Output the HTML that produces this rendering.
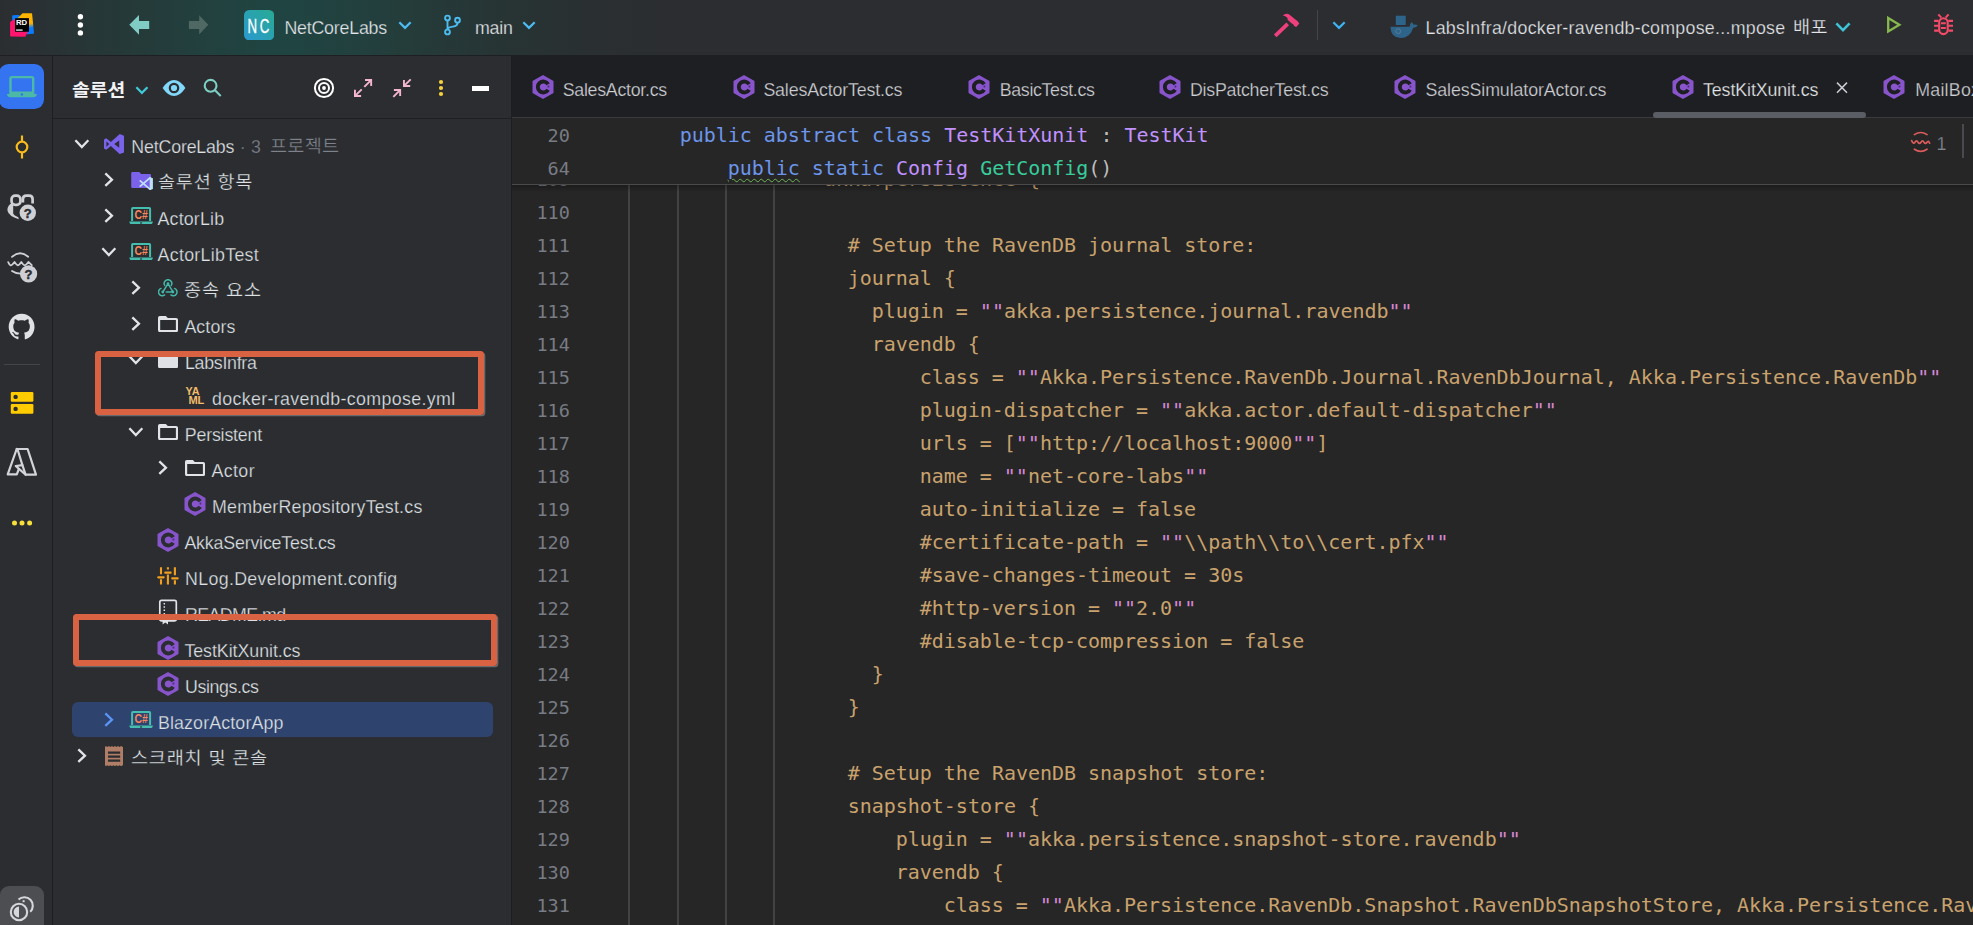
<!DOCTYPE html><html lang="ko"><head><meta charset="utf-8"><title>Rider</title><style>
html,body{margin:0;padding:0;background:#2b2d30;overflow:hidden}
#root{position:relative;width:1973px;height:925px;overflow:hidden;background:#2b2d30}
span{display:block}
.k{color:#6c95eb}.c{color:#c191ff}.m{color:#39cc9b}.e{color:#d688d4}.p{color:#bdbdbd}
</style></head><body><div id="root">
<div style="position:absolute;left:0px;top:0px;width:1973px;height:55px;background:linear-gradient(90deg,#2b2e31 0px,#2a3134 40px,#263737 100px,#243c3b 160px,#22403e 200px,#204441 260px,#204441 300px,#22403e 360px,#243d3b 400px,#253938 440px,#273434 500px,#293132 560px,#2a2f31 600px,#2b2e30 640px,#2b2d30 700px);"></div>
<div style="position:absolute;left:0px;top:55px;width:1973px;height:1px;background:#1e1f22;"></div>
<div style="position:absolute;left:52px;top:56px;width:1px;height:869px;background:#1e1f22;"></div>
<div style="position:absolute;left:53px;top:118px;width:458px;height:1px;background:#1e1f22;"></div>
<div style="position:absolute;left:511px;top:56px;width:1px;height:869px;background:#1e1f22;"></div>
<div style="position:absolute;left:512px;top:56px;width:1461px;height:61px;background:#1e1f22;"></div>
<div style="position:absolute;left:512px;top:117px;width:1461px;height:1px;background:#393b40;"></div>
<div style="position:absolute;left:512px;top:118px;width:1461px;height:807px;background:#262626;"></div>
<svg style="position:absolute;left:9px;top:11px;" width="28" height="28" viewBox="0 0 28 28"><defs><linearGradient id="rg1" x1="0.5" y1="0" x2="0.6" y2="1"><stop offset="0" stop-color="#ffb400"/><stop offset="0.5" stop-color="#ffb400"/><stop offset="0.72" stop-color="#0a7bff"/><stop offset="1" stop-color="#0a7bff"/></linearGradient></defs><path d="M3.200 4.800 Q3.200 4.200 3.800 4.200 L10.500 4 V8.500 L3.200 10.200 Z" fill="#0a7bff"/><path d="M13.600 2.200 H22.400 Q23 2.200 23.100 2.800 L25 22 Q25 22.800 24.300 22.800 L17.500 23.200 L19 7.500 H8.200 Z" fill="url(#rg1)"/><path d="M1.100 11.300 Q1.100 10.700 1.700 10.400 L6.500 7.800 V20.600 H19.600 L18 22.300 L16.600 25.300 Q16.400 25.800 15.800 25.800 L1.800 25.400 Q1.100 25.400 1.100 24.700 Z" fill="#ff146e"/><rect x="6" y="7.200" width="14" height="13.500" fill="#000"/><text x="7" y="13.600" font-family="Liberation Sans,sans-serif" font-weight="700" font-size="7.400" fill="#fff" textLength="11.200" lengthAdjust="spacingAndGlyphs">RD</text><rect x="7.100" y="18.300" width="6.500" height="1.600" fill="#c4c4c4"/></svg>
<svg style="position:absolute;left:75px;top:10px;" width="12" height="32" viewBox="0 0 12 32"><circle cx="5.400" cy="6.800" r="2.700" fill="#fff"/><circle cx="5.400" cy="15" r="2.700" fill="#fff"/><circle cx="5.400" cy="22.900" r="2.700" fill="#fff"/></svg>
<svg style="position:absolute;left:128px;top:14px;" width="24" height="22" viewBox="0 0 24 22"><path d="M1.300 10.800 L11 1.100 V6.900 H21.200 V15.100 H11 V20.700 Z" fill="#80ccc4"/></svg>
<svg style="position:absolute;left:187px;top:14px;" width="24" height="22" viewBox="0 0 24 22"><path d="M21.300 10.800 L12.200 1.300 V7.100 H1.900 V15.100 H12.200 V20.600 Z" fill="#506864"/></svg>
<svg style="position:absolute;left:243.9px;top:9.7px;" width="30.2" height="30.3" viewBox="0 0 30.2 30.3"><defs><linearGradient id="ncg" x1="0" y1="1" x2="1" y2="0"><stop offset="0" stop-color="#2a99d0"/><stop offset="1" stop-color="#28aa92"/></linearGradient></defs><rect x="0" y="0" width="30.2" height="30.3" rx="5.2" fill="url(#ncg)"/><text x="3.500" y="23.500" font-family="Liberation Sans,sans-serif" font-size="20.500" letter-spacing="4" fill="#fff" stroke="#fff" stroke-width="0.35" textLength="24.400" lengthAdjust="spacingAndGlyphs">NC</text></svg>
<svg style="position:absolute;left:397px;top:20px;" width="16" height="11" viewBox="0 0 16 11"><path d="M3.1 3.1 L8.0 7.9 L12.9 3.1" fill="none" stroke="#4cbcf2" stroke-width="2.2" stroke-linecap="square" stroke-linejoin="miter"/></svg>
<svg style="position:absolute;left:442px;top:13px;" width="22" height="24" viewBox="0 0 22 24"><g fill="none" stroke="#4cbcf2" stroke-width="1.9"><circle cx="5.5" cy="5" r="2.4"/><circle cx="15.5" cy="7.2" r="2.4"/><circle cx="5.5" cy="19" r="2.4"/><path d="M5.5 7.6 V16.4"/><path d="M15.5 9.8 Q15.5 13.2 11 13.6 Q6 14 5.5 16.4"/></g></svg>
<svg style="position:absolute;left:521px;top:20px;" width="16" height="11" viewBox="0 0 16 11"><path d="M3.1 3.1 L8.0 7.9 L12.9 3.1" fill="none" stroke="#4cbcf2" stroke-width="2.2" stroke-linecap="square" stroke-linejoin="miter"/></svg>
<svg style="position:absolute;left:1272px;top:12px;" width="30" height="28" viewBox="0 0 30 28"><path d="M3.200 23.900 L15.700 11.800" stroke="#ee407d" stroke-width="3.800" fill="none"/><path d="M10.800 3.500 Q14.400 0.300 18.200 3.200 L23.400 7.600 Q25.500 8.800 27.300 11.500 L24.300 15 Q22.300 14.600 21.100 12.200 L19.100 11.100 L15.600 7.700 L15.500 5.900 Q13.400 3.600 10.800 3.500 Z" fill="#ee407d"/></svg>
<div style="position:absolute;left:1317px;top:10px;width:1px;height:30px;background:#43454a;"></div>
<svg style="position:absolute;left:1331px;top:20px;" width="16" height="11" viewBox="0 0 16 11"><path d="M3.1 3.1 L8.0 7.9 L12.9 3.1" fill="none" stroke="#3db4f2" stroke-width="2.2" stroke-linecap="square" stroke-linejoin="miter"/></svg>
<svg style="position:absolute;left:1389px;top:15px;" width="30" height="25" viewBox="0 0 30 25"><rect x="6.800" y="0.700" width="9.900" height="9.300" fill="#2e648a"/><path d="M1.400 11.800 H20.700 Q20.600 8.300 22.800 6.900 Q24.300 8.300 24.500 9.700 Q26.600 9.200 28.900 10.300 Q27.200 12.900 24.200 12.700 Q21.300 23 11.500 23 Q1.900 22.800 1.400 11.800 Z" fill="#2e648a"/><circle cx="9.200" cy="16.200" r="2.400" fill="none" stroke="#5b7d93" stroke-width="0.900"/></svg>
<svg style="position:absolute;left:1834px;top:20.5px;" width="18" height="12.5" viewBox="0 0 18 12.5"><path d="M3.3 3.3 L9.0 9.2 L14.7 3.3" fill="none" stroke="#3ec4d6" stroke-width="2.6" stroke-linecap="square" stroke-linejoin="miter"/></svg>
<svg style="position:absolute;left:1884px;top:14px;" width="22" height="22" viewBox="0 0 22 22"><path d="M4.200 3.900 L15.400 10.700 L4.200 17.500 Z" fill="none" stroke="#87b94d" stroke-width="2.300" stroke-linejoin="miter"/></svg>
<svg style="position:absolute;left:1931px;top:12px;" width="26" height="26" viewBox="0 0 26 26"><g fill="none" stroke="#f54b69" stroke-width="2.100"><rect x="8.200" y="6.300" width="8.500" height="15.800" rx="4.250"/><path d="M7.300 2.400 L10.300 5.600 M17.600 2.400 L14.600 5.600"/><path d="M3.100 8.900 H7.600 M3.100 13.700 H7.600 M3.100 18.600 H7.600 M17.300 8.900 H22 M17.300 13.700 H22 M17.300 18.600 H22"/><path d="M10 11.300 H14.800 M10 16 H14.800"/></g></svg>
<div style="position:absolute;left:-1px;top:64px;width:45.3px;height:45.1px;background:#3574f0;border-radius:9.5px"></div>
<svg style="position:absolute;left:4px;top:72px;" width="38" height="30" viewBox="0 0 38 30"><path d="M6.500 20.800 V6.600 Q6.5 5.100 8 5.1 H27.700 Q29.200 5.100 29.2 6.600 V20.800 Z" fill="none" stroke="#4bb9a5" stroke-width="2.400"/><path d="M2.900 21.900 H33 Q32.300 25.200 29.500 25.2 H6.400 Q3.600 25.200 2.900 21.900 Z" fill="#4bb9a5"/><circle cx="17.9" cy="22.500" r="1.250" fill="#3574f0"/></svg>
<svg style="position:absolute;left:10px;top:134px;" width="24" height="26" viewBox="0 0 24 26"><g fill="none" stroke="#f8bb1c" stroke-width="2.2"><circle cx="12" cy="13" r="5.3"/><path d="M12 1.5 V7.7 M12 18.3 V24.5"/></g></svg>
<svg style="position:absolute;left:5px;top:192px;" width="36" height="32" viewBox="0 0 36 32"><g fill="none" stroke="#ced0d6" stroke-width="2.700"><rect x="6.550" y="3.550" width="8.900" height="9.300" rx="3.600"/><path d="M17.900 10.500 V7.200 Q17.900 3.600 21.500 3.600 H24 Q27.600 3.600 27.600 7.200 V11.500"/></g><path d="M5.300 12 Q1.900 15 2.500 18.800 Q3.600 24.200 13.800 27.200 L13.300 25.300 Q9 23.500 8.200 21.700 V12 Z" fill="#ced0d6"/><circle cx="22.800" cy="20.800" r="9.600" fill="#2b2d30"/><circle cx="22.800" cy="20.800" r="8.200" fill="#ced0d6"/><text x="22.800" y="25.700" text-anchor="middle" font-family="Liberation Sans,sans-serif" font-weight="700" font-size="13" fill="#2b2d30" stroke="#2b2d30" stroke-width="0.400">?</text></svg>
<svg style="position:absolute;left:4px;top:250px;" width="38" height="36" viewBox="0 0 38 36"><g fill="none" stroke="#ced0d6" stroke-width="1.800" stroke-linecap="round" stroke-linejoin="round"><path d="M8 6.900 Q16 -0.200 24.200 6.700"/><path d="M4.200 12.100 Q5.800 15.500 6.900 15.300 Q8.500 14.800 10.500 11.900 Q12.300 14.900 13.900 15.300 Q15.400 14.900 17.300 11.900 Q19 14.900 20.700 15.300 Q22.300 14.900 24.400 11.900 L27.800 15.100"/><path d="M8 21 Q11.500 23.500 16.500 23.700"/></g><circle cx="24.600" cy="23.900" r="8.600" fill="#ced0d6"/><text x="24.600" y="28.800" text-anchor="middle" font-family="Liberation Sans,sans-serif" font-weight="700" font-size="13" fill="#2b2d30" stroke="#2b2d30" stroke-width="0.400">?</text></svg>
<svg style="position:absolute;left:8.35px;top:313.35px;" width="27.3" height="27.3" viewBox="0 0 28 28"><path fill="#dfe1e5" d="M14 0.8 C6.6 0.8 0.7 6.8 0.7 14.2 c0 5.9 3.8 10.9 9.1 12.7 0.7 0.1 0.9-0.3 0.9-0.6 v-2.3 c-3.7 0.8-4.5-1.8-4.5-1.8 -0.6-1.5-1.5-1.9-1.5-1.9 -1.2-0.8 0.1-0.8 0.1-0.8 1.3 0.1 2 1.4 2 1.4 1.2 2 3.1 1.4 3.9 1.1 0.1-0.9 0.5-1.4 0.8-1.8 -3-0.3-6.1-1.5-6.1-6.6 0-1.5 0.5-2.6 1.4-3.6 -0.1-0.3-0.6-1.7 0.1-3.5 0 0 1.1-0.4 3.7 1.4 1.1-0.3 2.2-0.4 3.3-0.4 s2.3 0.2 3.3 0.4 c2.5-1.7 3.7-1.4 3.7-1.4 0.7 1.8 0.3 3.2 0.1 3.5 0.9 0.9 1.4 2.1 1.4 3.6 0 5.1-3.1 6.3-6.1 6.6 0.5 0.4 0.9 1.2 0.9 2.5 v3.7 c0 0.4 0.2 0.8 0.9 0.6 5.3-1.8 9.1-6.800 9.1-12.700 C27.300 6.800 21.400 0.800 14 0.800 z"/></svg>
<div style="position:absolute;left:4px;top:364px;width:36px;height:1px;background:#43454a;"></div>
<svg style="position:absolute;left:10px;top:391px;" width="24" height="24" viewBox="0 0 24 24"><rect x="0.8" y="1" width="22.6" height="9.8" rx="1.2" fill="#ffcc00"/><rect x="0.8" y="13" width="22.6" height="9.8" rx="1.2" fill="#ffcc00"/><circle cx="5.6" cy="5.9" r="2.2" fill="#2b2d30"/><circle cx="5.6" cy="17.9" r="2.2" fill="#2b2d30"/></svg>
<svg style="position:absolute;left:6px;top:446px;" width="32" height="32" viewBox="0 0 32 32"><g fill="none" stroke="#d2d4d9" stroke-width="2.2" stroke-linejoin="round" stroke-linecap="round"><path d="M10.700 3 H21.600 L30 28.700 H19.600 L9.700 20 L16.400 19.100 L11.600 3.500"/><path d="M10.700 3 L1.700 28.400 H10.800 L12.900 23"/><path d="M16.400 19.100 L19.600 28.700"/></g></svg>
<svg style="position:absolute;left:10px;top:517px;" width="24" height="12" viewBox="0 0 24 12"><circle cx="4.5" cy="6" r="2.5" fill="#f7e03c"/><circle cx="12" cy="6" r="2.5" fill="#f7e03c"/><circle cx="19.6" cy="6" r="2.5" fill="#f7e03c"/></svg>
<div style="position:absolute;left:0px;top:886px;width:44px;height:50px;background:#4c4e52;border-radius:9px"></div>
<svg style="position:absolute;left:6px;top:894px;" width="34" height="31" viewBox="0 0 34 31"><g fill="none" stroke="#d5d7dc" stroke-width="2.1"><path d="M12.5 5.6 A8.3 8.3 0 1 1 24.2 17.8"/><circle cx="13" cy="18" r="8.2"/></g><path d="M13 12.6 A5.4 5.4 0 0 0 13 23.4 Z" fill="#d5d7dc"/><rect x="16.6" y="6.2" width="2" height="2" fill="#d5d7dc"/></svg>
<svg style="position:absolute;left:133.6px;top:85px;" width="15.8" height="11" viewBox="0 0 15.8 11"><path d="M3.1 3.1 L7.9 7.9 L12.700000000000001 3.1" fill="none" stroke="#40c8d8" stroke-width="2.2" stroke-linecap="square" stroke-linejoin="miter"/></svg>
<svg style="position:absolute;left:161px;top:78px;" width="26" height="20" viewBox="0 0 26 20"><path d="M1.6 10 Q7 2 13 2 Q19 2 24.4 10 Q19 18 13 18 Q7 18 1.6 10 Z" fill="#82d8fa"/><circle cx="13" cy="10" r="4.2" fill="#82d8fa" stroke="#2b2d30" stroke-width="2.2"/></svg>
<svg style="position:absolute;left:202px;top:77px;" width="22" height="22" viewBox="0 0 22 22"><g fill="none" stroke="#7dcfc4" stroke-width="2.1"><circle cx="8.6" cy="8.8" r="5.9"/><path d="M13 13.200 L18.700 18.900"/></g></svg>
<svg style="position:absolute;left:312px;top:76px;" width="24" height="24" viewBox="0 0 24 24"><g fill="none" stroke="#fff" stroke-width="2"><circle cx="12" cy="12" r="9.1"/><circle cx="12" cy="12" r="5"/></g><circle cx="12" cy="12" r="1.9" fill="#fff"/></svg>
<svg style="position:absolute;left:352px;top:77px;" width="22" height="22" viewBox="0 0 22 22"><g stroke="#f4b6cf" stroke-width="1.900" fill="none" stroke-linejoin="miter"><path d="M13 2.950 H19.150 V8.900"/><path d="M19.300 2.800 L12.300 9.800"/><path d="M2.950 12.800 V19.050 H9.100"/><path d="M2.800 19.200 L9.700 12.300"/></g></svg>
<svg style="position:absolute;left:391px;top:77px;" width="22" height="22" viewBox="0 0 22 22"><g stroke="#f4b6cf" stroke-width="1.900" fill="none" stroke-linejoin="miter"><path d="M12.950 3.100 V9.050 H19.200"/><path d="M12.800 9.200 L19.700 2.300"/><path d="M2.900 12.950 H9.150 V19.100"/><path d="M9.300 12.800 L2.300 19.800"/></g></svg>
<svg style="position:absolute;left:436px;top:78px;" width="10" height="20" viewBox="0 0 10 20"><circle cx="5" cy="4" r="2.1" fill="#f8d23c"/><circle cx="5" cy="10" r="2.1" fill="#f8d23c"/><circle cx="5" cy="16" r="2.1" fill="#f8d23c"/></svg>
<div style="position:absolute;left:472px;top:86px;width:16.5px;height:4.5px;background:#ffffff;"></div>
<div style="position:absolute;left:71.6px;top:701.6px;width:421.4px;height:35.8px;background:#2e436e;border-radius:6px"></div>
<svg style="position:absolute;left:73.15px;top:138.10000000000002px;" width="17.7" height="12.2" viewBox="0 0 17.7 12.2"><path d="M3.15 3.15 L8.85 9.049999999999999 L14.549999999999999 3.15" fill="none" stroke="#e1e3e8" stroke-width="2.3" stroke-linecap="square" stroke-linejoin="miter"/></svg>
<svg style="position:absolute;left:103.9px;top:133.9px;" width="20.2" height="20.1" viewBox="0 0 20.2 20.1"><path d="M15.7 0 L20.2 1.7 V18.4 L15.7 20.1 L6.9 12.1 L2.3 15.8 L0 14.6 V5.5 L2.3 4.3 L6.9 8 Z" fill="#7a62eb"/><path d="M15.2 6.4 L10.3 10.05 L15.2 13.7 Z M2.4 7.4 L5.2 10.05 L2.4 12.7 Z" fill="#2b2d30"/></svg>
<svg style="position:absolute;left:103.2px;top:171.4px;" width="12.1" height="17.3" viewBox="0 0 12.1 17.3"><path d="M3.15 3.15 L8.95 8.65 L3.15 14.15" fill="none" stroke="#e1e3e8" stroke-width="2.3" stroke-linecap="square" stroke-linejoin="miter"/></svg>
<svg style="position:absolute;left:130.9px;top:171.9px;" width="22" height="18.4" viewBox="0 0 22 18.4"><path d="M0.200 1.400 Q0.200 0.100 1.500 0.100 H8.300 L10.100 2.100 H18.800 Q20.100 2.100 20.100 3.400 V16 H1.500 Q0.200 16 0.200 14.700 Z" fill="#7a62eb"/><path d="M18.700 4.900 L21.900 6.300 V16.900 L18.700 18.300 Z" fill="#bee1fa"/><path d="M19.500 5.500 L8.700 14.600 M8.700 8.400 L19.500 17.700" stroke="#bee1fa" stroke-width="1.700" fill="none"/></svg>
<svg style="position:absolute;left:103.2px;top:207.4px;" width="12.1" height="17.3" viewBox="0 0 12.1 17.3"><path d="M3.15 3.15 L8.95 8.65 L3.15 14.15" fill="none" stroke="#e1e3e8" stroke-width="2.3" stroke-linecap="square" stroke-linejoin="miter"/></svg>
<svg style="position:absolute;left:128.9px;top:206.70000000000002px;" width="24.2" height="17.6" viewBox="0 0 24.2 17.6"><path d="M3.100 14 V1.700 Q3.100 1 3.800 1 H20.400 Q21.100 1 21.100 1.700 V14" fill="none" stroke="#46beaf" stroke-width="2" stroke-linejoin="round"/><path d="M0.300 14.600 H23.900 Q23.600 17.400 21.400 17.400 H2.800 Q0.600 17.400 0.300 14.600 Z" fill="#46beaf"/><rect x="11.100" y="15.400" width="2" height="1.200" fill="#2b2d30"/><text x="12.100" y="12.100" text-anchor="middle" font-family="Liberation Sans,sans-serif" font-weight="700" font-size="12.600" fill="#f5875f" textLength="13.400" lengthAdjust="spacingAndGlyphs">C#</text></svg>
<svg style="position:absolute;left:100.15px;top:246.10000000000002px;" width="17.7" height="12.2" viewBox="0 0 17.7 12.2"><path d="M3.15 3.15 L8.85 9.049999999999999 L14.549999999999999 3.15" fill="none" stroke="#e1e3e8" stroke-width="2.3" stroke-linecap="square" stroke-linejoin="miter"/></svg>
<svg style="position:absolute;left:128.9px;top:242.70000000000002px;" width="24.2" height="17.6" viewBox="0 0 24.2 17.6"><path d="M3.100 14 V1.700 Q3.100 1 3.800 1 H20.400 Q21.100 1 21.100 1.700 V14" fill="none" stroke="#46beaf" stroke-width="2" stroke-linejoin="round"/><path d="M0.300 14.600 H23.900 Q23.600 17.400 21.400 17.400 H2.800 Q0.600 17.400 0.300 14.600 Z" fill="#46beaf"/><rect x="11.100" y="15.400" width="2" height="1.200" fill="#2b2d30"/><text x="12.100" y="12.100" text-anchor="middle" font-family="Liberation Sans,sans-serif" font-weight="700" font-size="12.600" fill="#f5875f" textLength="13.400" lengthAdjust="spacingAndGlyphs">C#</text></svg>
<svg style="position:absolute;left:130.2px;top:279.40000000000003px;" width="12.1" height="17.3" viewBox="0 0 12.1 17.3"><path d="M3.15 3.15 L8.95 8.65 L3.15 14.15" fill="none" stroke="#e1e3e8" stroke-width="2.3" stroke-linecap="square" stroke-linejoin="miter"/></svg>
<svg style="position:absolute;left:158px;top:278.90000000000003px;" width="20" height="17.9" viewBox="0 0 21.7 19.2"><g fill="none" stroke="#43b8a8" stroke-width="1.6" stroke-linecap="round"><path d="M7.3 6.9 A4.1 4.1 0 1 1 14.4 6.9"/><path d="M7.2 17.2 A4.1 4.1 0 1 1 3.3 10.1"/><path d="M17.9 10.1 A4.1 4.1 0 1 1 14 17.2"/><path d="M10.85 5 L5.3 14 M10.85 5 L16.1 13.6 M16 14 H9"/></g><circle cx="10.85" cy="4.9" r="1.5" fill="#43b8a8"/><circle cx="5.2" cy="14" r="1.5" fill="#43b8a8"/><circle cx="16.200" cy="14" r="1.5" fill="#43b8a8"/></svg>
<svg style="position:absolute;left:130.2px;top:315.40000000000003px;" width="12.1" height="17.3" viewBox="0 0 12.1 17.3"><path d="M3.15 3.15 L8.95 8.65 L3.15 14.15" fill="none" stroke="#e1e3e8" stroke-width="2.3" stroke-linecap="square" stroke-linejoin="miter"/></svg>
<svg style="position:absolute;left:157.9px;top:315.90000000000003px;" width="20.2" height="16.4" viewBox="0 0 20.2 16.4"><path d="M1.100 3 V14 Q1.1 15.2 2.3 15.2 H17.8 Q19 15.2 19 14 V4.2 Q19 3 17.8 3 H9.5" fill="none" stroke="#e1e3e8" stroke-width="2.2" stroke-linejoin="round"/><path d="M0 1.8 Q0 0 1.8 0 H7.8 L10.600 2.800 V4.1 H0 Z" fill="#e1e3e8"/></svg>
<svg style="position:absolute;left:127.15px;top:354.1px;" width="17.7" height="12.2" viewBox="0 0 17.7 12.2"><path d="M3.15 3.15 L8.85 9.049999999999999 L14.549999999999999 3.15" fill="none" stroke="#e1e3e8" stroke-width="2.3" stroke-linecap="square" stroke-linejoin="miter"/></svg>
<svg style="position:absolute;left:157.9px;top:351.90000000000003px;" width="20.2" height="16.4" viewBox="0 0 20.2 16.4"><path d="M0 2 Q0 0 2 0 H7.8 L9.8 1.9 H18.1 Q20.1 1.9 20.1 3.9 V14.3 Q20.1 16.3 18.1 16.3 H2 Q0 16.3 0 14.3 Z" fill="#dfe1e6"/></svg>
<svg style="position:absolute;left:185px;top:386.40000000000003px;" width="22" height="20" viewBox="0 0 22 20"><text x="0.6" y="8.8" font-family="Liberation Sans,sans-serif" font-weight="700" font-size="10.6" fill="#f2bc6c" textLength="14" lengthAdjust="spacingAndGlyphs">YA</text><text x="3.4" y="18.4" font-family="Liberation Sans,sans-serif" font-weight="700" font-size="10.6" fill="#f2bc6c" textLength="16" lengthAdjust="spacingAndGlyphs">ML</text></svg>
<svg style="position:absolute;left:127.15px;top:426.1px;" width="17.7" height="12.2" viewBox="0 0 17.7 12.2"><path d="M3.15 3.15 L8.85 9.049999999999999 L14.549999999999999 3.15" fill="none" stroke="#e1e3e8" stroke-width="2.3" stroke-linecap="square" stroke-linejoin="miter"/></svg>
<svg style="position:absolute;left:157.9px;top:423.90000000000003px;" width="20.2" height="16.4" viewBox="0 0 20.2 16.4"><path d="M1.100 3 V14 Q1.1 15.2 2.3 15.2 H17.8 Q19 15.2 19 14 V4.2 Q19 3 17.8 3 H9.5" fill="none" stroke="#e1e3e8" stroke-width="2.2" stroke-linejoin="round"/><path d="M0 1.8 Q0 0 1.8 0 H7.8 L10.600 2.800 V4.1 H0 Z" fill="#e1e3e8"/></svg>
<svg style="position:absolute;left:157.2px;top:459.40000000000003px;" width="12.1" height="17.3" viewBox="0 0 12.1 17.3"><path d="M3.15 3.15 L8.95 8.65 L3.15 14.15" fill="none" stroke="#e1e3e8" stroke-width="2.3" stroke-linecap="square" stroke-linejoin="miter"/></svg>
<svg style="position:absolute;left:184.9px;top:459.90000000000003px;" width="20.2" height="16.4" viewBox="0 0 20.2 16.4"><path d="M1.100 3 V14 Q1.1 15.2 2.3 15.2 H17.8 Q19 15.2 19 14 V4.2 Q19 3 17.8 3 H9.5" fill="none" stroke="#e1e3e8" stroke-width="2.2" stroke-linejoin="round"/><path d="M0 1.8 Q0 0 1.8 0 H7.8 L10.600 2.800 V4.1 H0 Z" fill="#e1e3e8"/></svg>
<svg style="position:absolute;left:183.9px;top:491.9px;" width="22" height="24" viewBox="0 0 22 24"><path d="M11 0.9 L20.7 6.4 V17.6 L11 23.1 L1.3 17.6 V6.4 Z" fill="#8855cc" stroke="#8855cc" stroke-width="1.6" stroke-linejoin="round"/><path d="M16.100 9.300 A5.5 5.5 0 1 0 16.100 14.700" fill="none" stroke="#2b2d30" stroke-width="3.9"/><rect x="15.600" y="10.500" width="1.700" height="2" fill="#4d2f7c"/></svg>
<svg style="position:absolute;left:157px;top:527.9px;" width="22" height="24" viewBox="0 0 22 24"><path d="M11 0.9 L20.7 6.4 V17.6 L11 23.1 L1.3 17.6 V6.4 Z" fill="#8855cc" stroke="#8855cc" stroke-width="1.6" stroke-linejoin="round"/><path d="M16.100 9.300 A5.5 5.5 0 1 0 16.100 14.700" fill="none" stroke="#2b2d30" stroke-width="3.9"/><rect x="15.600" y="10.500" width="1.700" height="2" fill="#4d2f7c"/></svg>
<svg style="position:absolute;left:157px;top:566.5999999999999px;" width="22" height="18" viewBox="0 0 22 18"><g stroke="#f0a01e" stroke-width="2.1" fill="none"><path d="M4 0.2 V7.2 M4 12.200 V17.4 M10.9 0.2 V2.6 M10.9 7.6 V17.4 M17.9 0.2 V8.3 M17.9 13.3 V17.4"/></g><g stroke="#f0a01e" stroke-width="2.3" fill="none" stroke-linecap="round"><path d="M1.3 10.3 H6.6 M8.3 5.7 H13.6 M15.3 11.4 H20.6"/></g></svg>
<svg style="position:absolute;left:158px;top:599.1999999999999px;" width="20" height="26" viewBox="0 0 20 26"><g fill="none" stroke="#e1e3e8" stroke-width="1.7"><rect x="1.8" y="1.4" width="16.5" height="20.4" rx="1.600"/></g><path d="M6.3 4 V19" stroke="#e1e3e8" stroke-width="1.5" stroke-dasharray="1.500 1.8" fill="none"/><path d="M4.6 21 H10 V25.5 L7.3 23.6 L4.6 25.5 Z" fill="#e1e3e8"/></svg>
<svg style="position:absolute;left:157px;top:635.9px;" width="22" height="24" viewBox="0 0 22 24"><path d="M11 0.9 L20.7 6.4 V17.6 L11 23.1 L1.3 17.6 V6.4 Z" fill="#8855cc" stroke="#8855cc" stroke-width="1.6" stroke-linejoin="round"/><path d="M16.100 9.300 A5.5 5.5 0 1 0 16.100 14.700" fill="none" stroke="#2b2d30" stroke-width="3.9"/><rect x="15.600" y="10.500" width="1.700" height="2" fill="#4d2f7c"/></svg>
<svg style="position:absolute;left:157px;top:671.9px;" width="22" height="24" viewBox="0 0 22 24"><path d="M11 0.9 L20.7 6.4 V17.6 L11 23.1 L1.3 17.6 V6.4 Z" fill="#8855cc" stroke="#8855cc" stroke-width="1.6" stroke-linejoin="round"/><path d="M16.100 9.300 A5.5 5.5 0 1 0 16.100 14.700" fill="none" stroke="#2b2d30" stroke-width="3.9"/><rect x="15.600" y="10.500" width="1.700" height="2" fill="#4d2f7c"/></svg>
<svg style="position:absolute;left:103.2px;top:711.4px;" width="12.1" height="17.3" viewBox="0 0 12.1 17.3"><path d="M3.15 3.15 L8.95 8.65 L3.15 14.15" fill="none" stroke="#5a94f5" stroke-width="2.3" stroke-linecap="square" stroke-linejoin="miter"/></svg>
<svg style="position:absolute;left:128.9px;top:710.6999999999999px;" width="24.2" height="17.6" viewBox="0 0 24.2 17.6"><path d="M3.100 14 V1.700 Q3.100 1 3.800 1 H20.400 Q21.100 1 21.100 1.700 V14" fill="none" stroke="#46beaf" stroke-width="2" stroke-linejoin="round"/><path d="M0.300 14.600 H23.900 Q23.600 17.400 21.400 17.400 H2.800 Q0.600 17.400 0.300 14.600 Z" fill="#46beaf"/><rect x="11.100" y="15.400" width="2" height="1.200" fill="#2b2d30"/><text x="12.100" y="12.100" text-anchor="middle" font-family="Liberation Sans,sans-serif" font-weight="700" font-size="12.600" fill="#f5875f" textLength="13.400" lengthAdjust="spacingAndGlyphs">C#</text></svg>
<svg style="position:absolute;left:76.2px;top:747.4px;" width="12.1" height="17.3" viewBox="0 0 12.1 17.3"><path d="M3.15 3.15 L8.95 8.65 L3.15 14.15" fill="none" stroke="#e1e3e8" stroke-width="2.3" stroke-linecap="square" stroke-linejoin="miter"/></svg>
<svg style="position:absolute;left:105px;top:746px;" width="18.4" height="20.2" viewBox="0 0 18.4 20.2"><path d="M0 1 L0.8 0 L2.3 1 L3.800 0 L5.400 1 L6.9 0 L8.400 1 L9.9 0 L11.500 1 L13 0 L14.5 1 L16.100 0 L17.6 1 L18.4 0.5 V19.700 L17.6 19.2 L16.1 20.2 L14.5 19.2 L13 20.2 L11.5 19.2 L9.9 20.2 L8.4 19.2 L6.9 20.2 L5.4 19.2 L3.8 20.2 L2.3 19.200 L0.8 20.2 L0 19.2 Z" fill="#b07d66"/><path d="M3 6.600 H15.2 M3 10.600 H15.2 M3 14.6 H15.2" stroke="#2b2d30" stroke-width="2.200"/></svg>
<svg style="position:absolute;left:532px;top:74.6px;" width="22" height="24" viewBox="0 0 22 24"><path d="M11 0.9 L20.7 6.4 V17.6 L11 23.1 L1.3 17.6 V6.4 Z" fill="#8855cc" stroke="#8855cc" stroke-width="1.6" stroke-linejoin="round"/><path d="M16.100 9.300 A5.5 5.5 0 1 0 16.100 14.700" fill="none" stroke="#1e1f22" stroke-width="3.9"/><rect x="15.600" y="10.500" width="1.700" height="2" fill="#4d2f7c"/></svg>
<svg style="position:absolute;left:732.5px;top:74.6px;" width="22" height="24" viewBox="0 0 22 24"><path d="M11 0.9 L20.7 6.4 V17.6 L11 23.1 L1.3 17.6 V6.4 Z" fill="#8855cc" stroke="#8855cc" stroke-width="1.6" stroke-linejoin="round"/><path d="M16.100 9.300 A5.5 5.5 0 1 0 16.100 14.700" fill="none" stroke="#1e1f22" stroke-width="3.9"/><rect x="15.600" y="10.500" width="1.700" height="2" fill="#4d2f7c"/></svg>
<svg style="position:absolute;left:967.8px;top:74.6px;" width="22" height="24" viewBox="0 0 22 24"><path d="M11 0.9 L20.7 6.4 V17.6 L11 23.1 L1.3 17.6 V6.4 Z" fill="#8855cc" stroke="#8855cc" stroke-width="1.6" stroke-linejoin="round"/><path d="M16.100 9.300 A5.5 5.5 0 1 0 16.100 14.700" fill="none" stroke="#1e1f22" stroke-width="3.9"/><rect x="15.600" y="10.500" width="1.700" height="2" fill="#4d2f7c"/></svg>
<svg style="position:absolute;left:1159px;top:74.6px;" width="22" height="24" viewBox="0 0 22 24"><path d="M11 0.9 L20.7 6.4 V17.6 L11 23.1 L1.3 17.6 V6.4 Z" fill="#8855cc" stroke="#8855cc" stroke-width="1.6" stroke-linejoin="round"/><path d="M16.100 9.300 A5.5 5.5 0 1 0 16.100 14.700" fill="none" stroke="#1e1f22" stroke-width="3.9"/><rect x="15.600" y="10.500" width="1.700" height="2" fill="#4d2f7c"/></svg>
<svg style="position:absolute;left:1394px;top:74.6px;" width="22" height="24" viewBox="0 0 22 24"><path d="M11 0.9 L20.7 6.4 V17.6 L11 23.1 L1.3 17.6 V6.4 Z" fill="#8855cc" stroke="#8855cc" stroke-width="1.6" stroke-linejoin="round"/><path d="M16.100 9.300 A5.5 5.5 0 1 0 16.100 14.700" fill="none" stroke="#1e1f22" stroke-width="3.9"/><rect x="15.600" y="10.500" width="1.700" height="2" fill="#4d2f7c"/></svg>
<svg style="position:absolute;left:1672px;top:74.6px;" width="22" height="24" viewBox="0 0 22 24"><path d="M11 0.9 L20.7 6.4 V17.6 L11 23.1 L1.3 17.6 V6.4 Z" fill="#8855cc" stroke="#8855cc" stroke-width="1.6" stroke-linejoin="round"/><path d="M16.100 9.300 A5.5 5.5 0 1 0 16.100 14.700" fill="none" stroke="#1e1f22" stroke-width="3.9"/><rect x="15.600" y="10.500" width="1.700" height="2" fill="#4d2f7c"/></svg>
<svg style="position:absolute;left:1883px;top:74.6px;" width="22" height="24" viewBox="0 0 22 24"><path d="M11 0.9 L20.7 6.4 V17.6 L11 23.1 L1.3 17.6 V6.4 Z" fill="#8855cc" stroke="#8855cc" stroke-width="1.6" stroke-linejoin="round"/><path d="M16.100 9.300 A5.5 5.5 0 1 0 16.100 14.700" fill="none" stroke="#1e1f22" stroke-width="3.9"/><rect x="15.600" y="10.500" width="1.700" height="2" fill="#4d2f7c"/></svg>
<svg style="position:absolute;left:1835px;top:81px;" width="14" height="14" viewBox="0 0 14 14"><path d="M2 1.6 L12 11.8 M12 1.6 L2 11.8" stroke="#c9ccd3" stroke-width="1.5" fill="none"/></svg>
<div style="position:absolute;left:1652.5px;top:112px;width:213px;height:5.5px;background:#5a5d63;border-radius:3px"></div>
<span id="t0" style="position:absolute;left:284.4px;top:27.63px;font-family:'Liberation Sans','Noto Sans CJK KR',sans-serif;font-size:17.8px;font-weight:400;color:#e4e6ea;white-space:pre;line-height:0;letter-spacing:-0.1983px;-webkit-text-stroke:0.25px #21423f;">NetCoreLabs</span>
<span id="t1" style="position:absolute;left:475px;top:27.63px;font-family:'Liberation Sans','Noto Sans CJK KR',sans-serif;font-size:17.8px;font-weight:400;color:#e4e6ea;white-space:pre;line-height:0;letter-spacing:-0.2367px;-webkit-text-stroke:0.25px #263736;">main</span>
<span id="t2" style="position:absolute;left:1425.5px;top:27.63px;font-family:'Liberation Sans','Noto Sans CJK KR',sans-serif;font-size:17.8px;font-weight:400;color:#e4e6ea;white-space:pre;line-height:0;letter-spacing:0.2752px;-webkit-text-stroke:0.25px #2b2d30;">LabsInfra/docker-ravendb-compose...mpose</span>
<span id="t3" style="position:absolute;left:1793.2px;top:27.64px;font-family:'Liberation Sans','Noto Sans CJK KR',sans-serif;font-size:16.9px;font-weight:400;color:#e4e6ea;white-space:pre;line-height:0;letter-spacing:0.4531px;transform:scaleX(1.1);transform-origin:0 0;-webkit-text-stroke:0.25px #2b2d30;">배포</span>
<span id="t4" style="position:absolute;left:72px;top:90.20px;font-family:'Liberation Sans','Noto Sans CJK KR',sans-serif;font-size:17.6px;font-weight:700;color:#f2f3f5;white-space:pre;line-height:0;letter-spacing:-0.0057px;transform:scaleX(1.1);transform-origin:0 0;">솔루션</span>
<span id="t5" style="position:absolute;left:131.3px;top:146.63px;font-family:'Liberation Sans','Noto Sans CJK KR',sans-serif;font-size:17.8px;font-weight:400;color:#dfe1e5;white-space:pre;line-height:0;letter-spacing:-0.1619px;-webkit-text-stroke:0.25px #2b2d30;">NetCoreLabs</span>
<span id="t6" style="position:absolute;left:239.7px;top:146.63px;font-family:'Liberation Sans','Noto Sans CJK KR',sans-serif;font-size:17.8px;font-weight:400;color:#7e828a;white-space:pre;line-height:0;letter-spacing:0.2781px;-webkit-text-stroke:0.25px #2b2d30;">· 3</span>
<span id="t7" style="position:absolute;left:269.5px;top:146.74px;font-family:'Liberation Sans','Noto Sans CJK KR',sans-serif;font-size:16.9px;font-weight:400;color:#7e828a;white-space:pre;line-height:0;letter-spacing:0.2070px;transform:scaleX(1.1);transform-origin:0 0;-webkit-text-stroke:0.25px #2b2d30;">프로젝트</span>
<span id="t8" style="position:absolute;left:157.6px;top:183.14px;font-family:'Liberation Sans','Noto Sans CJK KR',sans-serif;font-size:16.9px;font-weight:400;color:#dfe1e5;white-space:pre;line-height:0;letter-spacing:0.6925px;transform:scaleX(1.1);transform-origin:0 0;-webkit-text-stroke:0.25px #2b2d30;">솔루션 항목</span>
<span id="t9" style="position:absolute;left:157.6px;top:218.63px;font-family:'Liberation Sans','Noto Sans CJK KR',sans-serif;font-size:17.8px;font-weight:400;color:#dfe1e5;white-space:pre;line-height:0;letter-spacing:0.1707px;-webkit-text-stroke:0.25px #2b2d30;">ActorLib</span>
<span id="t10" style="position:absolute;left:157.6px;top:254.63px;font-family:'Liberation Sans','Noto Sans CJK KR',sans-serif;font-size:17.8px;font-weight:400;color:#dfe1e5;white-space:pre;line-height:0;letter-spacing:0.2964px;-webkit-text-stroke:0.25px #2b2d30;">ActorLibTest</span>
<span id="t11" style="position:absolute;left:184.2px;top:291.14px;font-family:'Liberation Sans','Noto Sans CJK KR',sans-serif;font-size:16.9px;font-weight:400;color:#dfe1e5;white-space:pre;line-height:0;letter-spacing:0.8099px;transform:scaleX(1.1);transform-origin:0 0;-webkit-text-stroke:0.25px #2b2d30;">종속 요소</span>
<span id="t12" style="position:absolute;left:184.4px;top:326.63px;font-family:'Liberation Sans','Noto Sans CJK KR',sans-serif;font-size:17.8px;font-weight:400;color:#dfe1e5;white-space:pre;line-height:0;letter-spacing:0.1156px;-webkit-text-stroke:0.25px #2b2d30;">Actors</span>
<span id="t13" style="position:absolute;left:185px;top:362.63px;font-family:'Liberation Sans','Noto Sans CJK KR',sans-serif;font-size:17.8px;font-weight:400;color:#dfe1e5;white-space:pre;line-height:0;letter-spacing:-0.2823px;-webkit-text-stroke:0.25px #2b2d30;">LabsInfra</span>
<span id="t14" style="position:absolute;left:211.9px;top:398.63px;font-family:'Liberation Sans','Noto Sans CJK KR',sans-serif;font-size:17.8px;font-weight:400;color:#dfe1e5;white-space:pre;line-height:0;letter-spacing:0.3608px;-webkit-text-stroke:0.25px #2b2d30;">docker-ravendb-compose.yml</span>
<span id="t15" style="position:absolute;left:184.8px;top:434.63px;font-family:'Liberation Sans','Noto Sans CJK KR',sans-serif;font-size:17.8px;font-weight:400;color:#dfe1e5;white-space:pre;line-height:0;letter-spacing:-0.1863px;-webkit-text-stroke:0.25px #2b2d30;">Persistent</span>
<span id="t16" style="position:absolute;left:211.4px;top:470.63px;font-family:'Liberation Sans','Noto Sans CJK KR',sans-serif;font-size:17.8px;font-weight:400;color:#dfe1e5;white-space:pre;line-height:0;letter-spacing:0.4169px;-webkit-text-stroke:0.25px #2b2d30;">Actor</span>
<span id="t17" style="position:absolute;left:212px;top:506.63px;font-family:'Liberation Sans','Noto Sans CJK KR',sans-serif;font-size:17.8px;font-weight:400;color:#dfe1e5;white-space:pre;line-height:0;letter-spacing:0.2154px;-webkit-text-stroke:0.25px #2b2d30;">MemberRepositoryTest.cs</span>
<span id="t18" style="position:absolute;left:184.4px;top:542.63px;font-family:'Liberation Sans','Noto Sans CJK KR',sans-serif;font-size:17.8px;font-weight:400;color:#dfe1e5;white-space:pre;line-height:0;letter-spacing:-0.1698px;-webkit-text-stroke:0.25px #2b2d30;">AkkaServiceTest.cs</span>
<span id="t19" style="position:absolute;left:185px;top:578.63px;font-family:'Liberation Sans','Noto Sans CJK KR',sans-serif;font-size:17.8px;font-weight:400;color:#dfe1e5;white-space:pre;line-height:0;letter-spacing:0.3431px;-webkit-text-stroke:0.25px #2b2d30;">NLog.Development.config</span>
<span id="t20" style="position:absolute;left:185px;top:614.63px;font-family:'Liberation Sans','Noto Sans CJK KR',sans-serif;font-size:17.8px;font-weight:400;color:#dfe1e5;white-space:pre;line-height:0;letter-spacing:-0.5799px;-webkit-text-stroke:0.25px #2b2d30;">README.md</span>
<span id="t21" style="position:absolute;left:184.4px;top:650.63px;font-family:'Liberation Sans','Noto Sans CJK KR',sans-serif;font-size:17.8px;font-weight:400;color:#dfe1e5;white-space:pre;line-height:0;letter-spacing:-0.0350px;-webkit-text-stroke:0.25px #2b2d30;">TestKitXunit.cs</span>
<span id="t22" style="position:absolute;left:185px;top:686.63px;font-family:'Liberation Sans','Noto Sans CJK KR',sans-serif;font-size:17.8px;font-weight:400;color:#dfe1e5;white-space:pre;line-height:0;letter-spacing:-0.3976px;-webkit-text-stroke:0.25px #2b2d30;">Usings.cs</span>
<span id="t23" style="position:absolute;left:157.9px;top:722.63px;font-family:'Liberation Sans','Noto Sans CJK KR',sans-serif;font-size:17.8px;font-weight:400;color:#dfe1e5;white-space:pre;line-height:0;letter-spacing:0.1538px;-webkit-text-stroke:0.25px #2e436e;">BlazorActorApp</span>
<span id="t24" style="position:absolute;left:130.6px;top:759.14px;font-family:'Liberation Sans','Noto Sans CJK KR',sans-serif;font-size:16.9px;font-weight:400;color:#dfe1e5;white-space:pre;line-height:0;letter-spacing:0.7082px;transform:scaleX(1.1);transform-origin:0 0;-webkit-text-stroke:0.25px #2b2d30;">스크래치 및 콘솔</span>
<span id="t25" style="position:absolute;left:562.7px;top:89.73px;font-family:'Liberation Sans','Noto Sans CJK KR',sans-serif;font-size:17.8px;font-weight:400;color:#ced0d6;white-space:pre;line-height:0;letter-spacing:-0.2642px;-webkit-text-stroke:0.25px #1e1f22;">SalesActor.cs</span>
<span id="t26" style="position:absolute;left:763.4px;top:89.73px;font-family:'Liberation Sans','Noto Sans CJK KR',sans-serif;font-size:17.8px;font-weight:400;color:#ced0d6;white-space:pre;line-height:0;letter-spacing:-0.1419px;-webkit-text-stroke:0.25px #1e1f22;">SalesActorTest.cs</span>
<span id="t27" style="position:absolute;left:999.8px;top:89.73px;font-family:'Liberation Sans','Noto Sans CJK KR',sans-serif;font-size:17.8px;font-weight:400;color:#ced0d6;white-space:pre;line-height:0;letter-spacing:-0.3427px;-webkit-text-stroke:0.25px #1e1f22;">BasicTest.cs</span>
<span id="t28" style="position:absolute;left:1190px;top:89.73px;font-family:'Liberation Sans','Noto Sans CJK KR',sans-serif;font-size:17.8px;font-weight:400;color:#ced0d6;white-space:pre;line-height:0;letter-spacing:-0.2351px;-webkit-text-stroke:0.25px #1e1f22;">DisPatcherTest.cs</span>
<span id="t29" style="position:absolute;left:1425.5px;top:89.73px;font-family:'Liberation Sans','Noto Sans CJK KR',sans-serif;font-size:17.8px;font-weight:400;color:#ced0d6;white-space:pre;line-height:0;letter-spacing:-0.0922px;-webkit-text-stroke:0.25px #1e1f22;">SalesSimulatorActor.cs</span>
<span id="t30" style="position:absolute;left:1703px;top:89.73px;font-family:'Liberation Sans','Noto Sans CJK KR',sans-serif;font-size:17.8px;font-weight:400;color:#e6e8ec;white-space:pre;line-height:0;letter-spacing:-0.0883px;-webkit-text-stroke:0.25px #1e1f22;">TestKitXunit.cs</span>
<span id="t31" style="position:absolute;left:1915.2px;top:89.73px;font-family:'Liberation Sans','Noto Sans CJK KR',sans-serif;font-size:17.8px;font-weight:400;color:#ced0d6;white-space:pre;line-height:0;letter-spacing:0.0000px;-webkit-text-stroke:0.25px #1e1f22;letter-spacing:0.25px;">MailBox</span>
<span id="t32" style="position:absolute;left:823.7px;top:179.28px;font-family:'DejaVu Sans Mono','Liberation Mono',monospace;font-size:20px;font-weight:400;color:#c9a26d;white-space:pre;line-height:0;letter-spacing:0.0000px;letter-spacing:-0.022px;">akka.persistence {</span>
<span id="t33" style="position:absolute;left:536.48px;top:179.90px;font-family:'DejaVu Sans Mono','Liberation Mono',monospace;font-size:18.5px;font-weight:400;color:#787c84;white-space:pre;line-height:0;letter-spacing:0.0000px;">109</span>
<span id="t34" style="position:absolute;left:536.48px;top:212.90px;font-family:'DejaVu Sans Mono','Liberation Mono',monospace;font-size:18.5px;font-weight:400;color:#787c84;white-space:pre;line-height:0;letter-spacing:0.0000px;">110</span>
<span id="t35" style="position:absolute;left:536.48px;top:245.90px;font-family:'DejaVu Sans Mono','Liberation Mono',monospace;font-size:18.5px;font-weight:400;color:#787c84;white-space:pre;line-height:0;letter-spacing:0.0000px;">111</span>
<span id="t36" style="position:absolute;left:536.48px;top:278.90px;font-family:'DejaVu Sans Mono','Liberation Mono',monospace;font-size:18.5px;font-weight:400;color:#787c84;white-space:pre;line-height:0;letter-spacing:0.0000px;">112</span>
<span id="t37" style="position:absolute;left:536.48px;top:311.90px;font-family:'DejaVu Sans Mono','Liberation Mono',monospace;font-size:18.5px;font-weight:400;color:#787c84;white-space:pre;line-height:0;letter-spacing:0.0000px;">113</span>
<span id="t38" style="position:absolute;left:536.48px;top:344.90px;font-family:'DejaVu Sans Mono','Liberation Mono',monospace;font-size:18.5px;font-weight:400;color:#787c84;white-space:pre;line-height:0;letter-spacing:0.0000px;">114</span>
<span id="t39" style="position:absolute;left:536.48px;top:377.90px;font-family:'DejaVu Sans Mono','Liberation Mono',monospace;font-size:18.5px;font-weight:400;color:#787c84;white-space:pre;line-height:0;letter-spacing:0.0000px;">115</span>
<span id="t40" style="position:absolute;left:536.48px;top:410.90px;font-family:'DejaVu Sans Mono','Liberation Mono',monospace;font-size:18.5px;font-weight:400;color:#787c84;white-space:pre;line-height:0;letter-spacing:0.0000px;">116</span>
<span id="t41" style="position:absolute;left:536.48px;top:443.90px;font-family:'DejaVu Sans Mono','Liberation Mono',monospace;font-size:18.5px;font-weight:400;color:#787c84;white-space:pre;line-height:0;letter-spacing:0.0000px;">117</span>
<span id="t42" style="position:absolute;left:536.48px;top:476.90px;font-family:'DejaVu Sans Mono','Liberation Mono',monospace;font-size:18.5px;font-weight:400;color:#787c84;white-space:pre;line-height:0;letter-spacing:0.0000px;">118</span>
<span id="t43" style="position:absolute;left:536.48px;top:509.90px;font-family:'DejaVu Sans Mono','Liberation Mono',monospace;font-size:18.5px;font-weight:400;color:#787c84;white-space:pre;line-height:0;letter-spacing:0.0000px;">119</span>
<span id="t44" style="position:absolute;left:536.48px;top:542.90px;font-family:'DejaVu Sans Mono','Liberation Mono',monospace;font-size:18.5px;font-weight:400;color:#787c84;white-space:pre;line-height:0;letter-spacing:0.0000px;">120</span>
<span id="t45" style="position:absolute;left:536.48px;top:575.90px;font-family:'DejaVu Sans Mono','Liberation Mono',monospace;font-size:18.5px;font-weight:400;color:#787c84;white-space:pre;line-height:0;letter-spacing:0.0000px;">121</span>
<span id="t46" style="position:absolute;left:536.48px;top:608.90px;font-family:'DejaVu Sans Mono','Liberation Mono',monospace;font-size:18.5px;font-weight:400;color:#787c84;white-space:pre;line-height:0;letter-spacing:0.0000px;">122</span>
<span id="t47" style="position:absolute;left:536.48px;top:641.90px;font-family:'DejaVu Sans Mono','Liberation Mono',monospace;font-size:18.5px;font-weight:400;color:#787c84;white-space:pre;line-height:0;letter-spacing:0.0000px;">123</span>
<span id="t48" style="position:absolute;left:536.48px;top:674.90px;font-family:'DejaVu Sans Mono','Liberation Mono',monospace;font-size:18.5px;font-weight:400;color:#787c84;white-space:pre;line-height:0;letter-spacing:0.0000px;">124</span>
<span id="t49" style="position:absolute;left:536.48px;top:707.90px;font-family:'DejaVu Sans Mono','Liberation Mono',monospace;font-size:18.5px;font-weight:400;color:#787c84;white-space:pre;line-height:0;letter-spacing:0.0000px;">125</span>
<span id="t50" style="position:absolute;left:536.48px;top:740.90px;font-family:'DejaVu Sans Mono','Liberation Mono',monospace;font-size:18.5px;font-weight:400;color:#787c84;white-space:pre;line-height:0;letter-spacing:0.0000px;">126</span>
<span id="t51" style="position:absolute;left:536.48px;top:773.90px;font-family:'DejaVu Sans Mono','Liberation Mono',monospace;font-size:18.5px;font-weight:400;color:#787c84;white-space:pre;line-height:0;letter-spacing:0.0000px;">127</span>
<span id="t52" style="position:absolute;left:536.48px;top:806.90px;font-family:'DejaVu Sans Mono','Liberation Mono',monospace;font-size:18.5px;font-weight:400;color:#787c84;white-space:pre;line-height:0;letter-spacing:0.0000px;">128</span>
<span id="t53" style="position:absolute;left:536.48px;top:839.90px;font-family:'DejaVu Sans Mono','Liberation Mono',monospace;font-size:18.5px;font-weight:400;color:#787c84;white-space:pre;line-height:0;letter-spacing:0.0000px;">129</span>
<span id="t54" style="position:absolute;left:536.48px;top:872.90px;font-family:'DejaVu Sans Mono','Liberation Mono',monospace;font-size:18.5px;font-weight:400;color:#787c84;white-space:pre;line-height:0;letter-spacing:0.0000px;">130</span>
<span id="t55" style="position:absolute;left:536.48px;top:905.90px;font-family:'DejaVu Sans Mono','Liberation Mono',monospace;font-size:18.5px;font-weight:400;color:#787c84;white-space:pre;line-height:0;letter-spacing:0.0000px;">131</span>
<span id="t56" style="position:absolute;left:847.7px;top:245.28px;font-family:'DejaVu Sans Mono','Liberation Mono',monospace;font-size:20px;font-weight:400;color:#c9a26d;white-space:pre;line-height:0;letter-spacing:0.0000px;letter-spacing:-0.022px;"># Setup the RavenDB journal store:</span>
<span id="t57" style="position:absolute;left:847.7px;top:278.28px;font-family:'DejaVu Sans Mono','Liberation Mono',monospace;font-size:20px;font-weight:400;color:#c9a26d;white-space:pre;line-height:0;letter-spacing:0.0000px;letter-spacing:-0.022px;">journal {</span>
<span id="t58" style="position:absolute;left:871.7px;top:311.28px;font-family:'DejaVu Sans Mono','Liberation Mono',monospace;font-size:20px;font-weight:400;color:#c9a26d;white-space:pre;line-height:0;letter-spacing:0.0000px;letter-spacing:-0.022px;">plugin = <span class="e" style="display:inline">&quot;&quot;</span>akka.persistence.journal.ravendb<span class="e" style="display:inline">&quot;&quot;</span></span>
<span id="t59" style="position:absolute;left:871.7px;top:344.28px;font-family:'DejaVu Sans Mono','Liberation Mono',monospace;font-size:20px;font-weight:400;color:#c9a26d;white-space:pre;line-height:0;letter-spacing:0.0000px;letter-spacing:-0.022px;">ravendb {</span>
<span id="t60" style="position:absolute;left:919.7px;top:377.28px;font-family:'DejaVu Sans Mono','Liberation Mono',monospace;font-size:20px;font-weight:400;color:#c9a26d;white-space:pre;line-height:0;letter-spacing:0.0000px;letter-spacing:-0.022px;">class = <span class="e" style="display:inline">&quot;&quot;</span>Akka.Persistence.RavenDb.Journal.RavenDbJournal, Akka.Persistence.RavenDb<span class="e" style="display:inline">&quot;&quot;</span></span>
<span id="t61" style="position:absolute;left:919.7px;top:410.28px;font-family:'DejaVu Sans Mono','Liberation Mono',monospace;font-size:20px;font-weight:400;color:#c9a26d;white-space:pre;line-height:0;letter-spacing:0.0000px;letter-spacing:-0.022px;">plugin-dispatcher = <span class="e" style="display:inline">&quot;&quot;</span>akka.actor.default-dispatcher<span class="e" style="display:inline">&quot;&quot;</span></span>
<span id="t62" style="position:absolute;left:919.7px;top:443.28px;font-family:'DejaVu Sans Mono','Liberation Mono',monospace;font-size:20px;font-weight:400;color:#c9a26d;white-space:pre;line-height:0;letter-spacing:0.0000px;letter-spacing:-0.022px;">urls = [<span class="e" style="display:inline">&quot;&quot;</span>http://localhost:9000<span class="e" style="display:inline">&quot;&quot;</span>]</span>
<span id="t63" style="position:absolute;left:919.7px;top:476.28px;font-family:'DejaVu Sans Mono','Liberation Mono',monospace;font-size:20px;font-weight:400;color:#c9a26d;white-space:pre;line-height:0;letter-spacing:0.0000px;letter-spacing:-0.022px;">name = <span class="e" style="display:inline">&quot;&quot;</span>net-core-labs<span class="e" style="display:inline">&quot;&quot;</span></span>
<span id="t64" style="position:absolute;left:919.7px;top:509.28px;font-family:'DejaVu Sans Mono','Liberation Mono',monospace;font-size:20px;font-weight:400;color:#c9a26d;white-space:pre;line-height:0;letter-spacing:0.0000px;letter-spacing:-0.022px;">auto-initialize = false</span>
<span id="t65" style="position:absolute;left:919.7px;top:542.28px;font-family:'DejaVu Sans Mono','Liberation Mono',monospace;font-size:20px;font-weight:400;color:#c9a26d;white-space:pre;line-height:0;letter-spacing:0.0000px;letter-spacing:-0.022px;">#certificate-path = <span class="e" style="display:inline">&quot;&quot;</span>\\path\\to\\cert.pfx<span class="e" style="display:inline">&quot;&quot;</span></span>
<span id="t66" style="position:absolute;left:919.7px;top:575.28px;font-family:'DejaVu Sans Mono','Liberation Mono',monospace;font-size:20px;font-weight:400;color:#c9a26d;white-space:pre;line-height:0;letter-spacing:0.0000px;letter-spacing:-0.022px;">#save-changes-timeout = 30s</span>
<span id="t67" style="position:absolute;left:919.7px;top:608.28px;font-family:'DejaVu Sans Mono','Liberation Mono',monospace;font-size:20px;font-weight:400;color:#c9a26d;white-space:pre;line-height:0;letter-spacing:0.0000px;letter-spacing:-0.022px;">#http-version = <span class="e" style="display:inline">&quot;&quot;</span>2.0<span class="e" style="display:inline">&quot;&quot;</span></span>
<span id="t68" style="position:absolute;left:919.7px;top:641.28px;font-family:'DejaVu Sans Mono','Liberation Mono',monospace;font-size:20px;font-weight:400;color:#c9a26d;white-space:pre;line-height:0;letter-spacing:0.0000px;letter-spacing:-0.022px;">#disable-tcp-compression = false</span>
<span id="t69" style="position:absolute;left:871.7px;top:674.28px;font-family:'DejaVu Sans Mono','Liberation Mono',monospace;font-size:20px;font-weight:400;color:#c9a26d;white-space:pre;line-height:0;letter-spacing:0.0000px;letter-spacing:-0.022px;">}</span>
<span id="t70" style="position:absolute;left:847.7px;top:707.28px;font-family:'DejaVu Sans Mono','Liberation Mono',monospace;font-size:20px;font-weight:400;color:#c9a26d;white-space:pre;line-height:0;letter-spacing:0.0000px;letter-spacing:-0.022px;">}</span>
<span id="t71" style="position:absolute;left:847.7px;top:773.28px;font-family:'DejaVu Sans Mono','Liberation Mono',monospace;font-size:20px;font-weight:400;color:#c9a26d;white-space:pre;line-height:0;letter-spacing:0.0000px;letter-spacing:-0.022px;"># Setup the RavenDB snapshot store:</span>
<span id="t72" style="position:absolute;left:847.7px;top:806.28px;font-family:'DejaVu Sans Mono','Liberation Mono',monospace;font-size:20px;font-weight:400;color:#c9a26d;white-space:pre;line-height:0;letter-spacing:0.0000px;letter-spacing:-0.022px;">snapshot-store {</span>
<span id="t73" style="position:absolute;left:895.7px;top:839.28px;font-family:'DejaVu Sans Mono','Liberation Mono',monospace;font-size:20px;font-weight:400;color:#c9a26d;white-space:pre;line-height:0;letter-spacing:0.0000px;letter-spacing:-0.022px;">plugin = <span class="e" style="display:inline">&quot;&quot;</span>akka.persistence.snapshot-store.ravendb<span class="e" style="display:inline">&quot;&quot;</span></span>
<span id="t74" style="position:absolute;left:895.7px;top:872.28px;font-family:'DejaVu Sans Mono','Liberation Mono',monospace;font-size:20px;font-weight:400;color:#c9a26d;white-space:pre;line-height:0;letter-spacing:0.0000px;letter-spacing:-0.022px;">ravendb {</span>
<span id="t75" style="position:absolute;left:943.7px;top:905.28px;font-family:'DejaVu Sans Mono','Liberation Mono',monospace;font-size:20px;font-weight:400;color:#c9a26d;white-space:pre;line-height:0;letter-spacing:0.0000px;letter-spacing:-0.022px;">class = <span class="e" style="display:inline">&quot;&quot;</span>Akka.Persistence.RavenDb.Snapshot.RavenDbSnapshotStore, Akka.Persistence.RavenDb<span class="e" style="display:inline">&quot;&quot;</span></span>
<span id="t76" style="position:absolute;left:547.62px;top:135.80px;font-family:'DejaVu Sans Mono','Liberation Mono',monospace;font-size:18.5px;font-weight:400;color:#787c84;white-space:pre;line-height:0;letter-spacing:0.0000px;z-index:5;">20</span>
<span id="t77" style="position:absolute;left:547.62px;top:168.80px;font-family:'DejaVu Sans Mono','Liberation Mono',monospace;font-size:18.5px;font-weight:400;color:#787c84;white-space:pre;line-height:0;letter-spacing:0.0000px;z-index:5;">64</span>
<span id="t78" style="position:absolute;left:679.7px;top:135.28px;font-family:'DejaVu Sans Mono','Liberation Mono',monospace;font-size:20px;font-weight:400;color:#bdbdbd;white-space:pre;line-height:0;letter-spacing:0.0000px;letter-spacing:-0.022px;z-index:5;"><span class="k" style="display:inline">public abstract class</span> <span class="c" style="display:inline">TestKitXunit</span> <span class="p" style="display:inline">:</span> <span class="c" style="display:inline">TestKit</span></span>
<span id="t79" style="position:absolute;left:727.7px;top:168.28px;font-family:'DejaVu Sans Mono','Liberation Mono',monospace;font-size:20px;font-weight:400;color:#bdbdbd;white-space:pre;line-height:0;letter-spacing:0.0000px;letter-spacing:-0.022px;z-index:5;"><span class="k" style="display:inline"><span style="display:inline;text-decoration:underline wavy #6fb55a 1.300px;text-underline-offset:3px">public</span> static</span> <span class="c" style="display:inline">Config</span> <span class="m" style="display:inline">GetConfig</span><span class="p" style="display:inline">()</span></span>
<span id="t80" style="position:absolute;left:1936.5px;top:143.66px;font-family:'Liberation Sans','Noto Sans CJK KR',sans-serif;font-size:18px;font-weight:400;color:#82868f;white-space:pre;line-height:0;letter-spacing:0.0000px;-webkit-text-stroke:0.25px #262626;z-index:6;">1</span>
<div style="position:absolute;left:628px;top:185px;width:2.1px;height:740px;background:#424242;"></div>
<div style="position:absolute;left:677px;top:185px;width:2.1px;height:740px;background:#424242;"></div>
<div style="position:absolute;left:725.1px;top:185px;width:2.1px;height:740px;background:#424242;"></div>
<div style="position:absolute;left:773.1px;top:185px;width:2.1px;height:740px;background:#424242;"></div>
<div style="position:absolute;left:512px;top:118px;width:1461px;height:66px;background:#262626;"></div>
<div style="position:absolute;left:512px;top:184px;width:1461px;height:1px;background:#4a4a4a;"></div>
<div style="position:absolute;left:512px;top:185px;width:1461px;height:7px;background:linear-gradient(180deg,rgba(0,0,0,0.28),rgba(0,0,0,0));"></div>
<svg style="position:absolute;left:1909px;top:130px;z-index:6" width="23" height="23" viewBox="0 0 23 23"><g fill="none" stroke="#db5c5c" stroke-width="1.7" stroke-linecap="round"><path d="M5.4 4.6 Q11.7 0.400 18 4.6"/><path d="M2.6 10.6 Q4.300 14.6 6 12.300 Q7.5 9.5 9 12.300 Q10.500 14.600 12 12.3 Q13.500 9.500 15 12.3 Q16.5 14.6 18 12.300 Q19.3 9.8 20.600 13.2"/><path d="M5.400 19.2 Q11.7 23.400 18 19.2"/></g></svg>
<div style="position:absolute;left:1962px;top:124px;width:2px;height:34px;background:#484a50;z-index:6"></div>
<div style="position:absolute;left:95.1px;top:351.1px;width:377.4px;height:51.9px;border:6px solid #d96242;border-radius:3.5px;box-shadow:1.3px 1.3px 0 rgba(110,110,112,0.95);z-index:9"></div>
<div style="position:absolute;left:73.3px;top:614.1px;width:412.2px;height:39.9px;border:6px solid #d96242;border-radius:3.5px;box-shadow:1.3px 1.3px 0 rgba(110,110,112,0.95);z-index:9"></div>
</div></body></html>
